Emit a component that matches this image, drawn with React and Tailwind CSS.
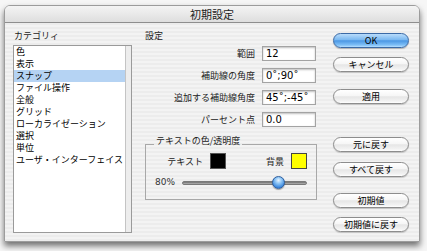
import React from "react";

const F = "font-['Noto_Sans_CJK_JP','Noto_Sans',sans-serif]";

function Btn({ children, primary, className = "" }) {
  const base =
    "h-[15px] w-[76px] rounded-full flex items-center justify-center text-[9px] leading-none text-black border ";
  const skin = primary
    ? "border-[#3b6aa6] bg-[linear-gradient(#b9dcfb,#7ab8f0_45%,#4b97e4_52%,#7fc0f7_85%,#b8e0ff)] shadow-[0_1px_1px_rgba(0,0,0,0.25)]"
    : "border-[#8d8d8d] bg-[linear-gradient(#ffffff,#f6f6f6_45%,#e6e6e6_52%,#f2f2f2_85%,#ffffff)] shadow-[0_1px_1px_rgba(0,0,0,0.18)]";
  return <div className={base + skin + " " + className}>{children}</div>;
}

function Field({ label, value }) {
  return (
    <div className="flex items-center h-[15px]">
      <div className="w-[110px] text-right text-[9px] leading-none text-[#222]">{label}</div>
      <div className="ml-[7px] h-[15px] w-[54px] bg-white border border-[#a3a3a3] shadow-[inset_0_1px_2px_rgba(0,0,0,0.25)] flex items-center pl-[3px] text-[10px] leading-none text-black font-['DejaVu_Sans',sans-serif]">
        {value}
      </div>
    </div>
  );
}

export default function App() {
  const items = [
    "色",
    "表示",
    "スナップ",
    "ファイル操作",
    "全般",
    "グリッド",
    "ローカライゼーション",
    "選択",
    "単位",
    "ユーザ・インターフェイス",
  ];
  return (
    <div className={"w-[427px] h-[251px] overflow-hidden bg-[#f6f6f6] pt-[5px] pl-[4px] " + F}>
      <div className="w-[416px] h-[237px] rounded-t-[6px] border border-[#9c9c9c] shadow-[0_4px_6px_rgba(0,0,0,0.55)] flex flex-col overflow-hidden">
        <div className="h-[17px] shrink-0 flex items-center justify-center text-[11px] leading-none text-[#222] border-b border-[#8e8e8e] bg-[linear-gradient(#f4f4f4,#dedede)]">
          初期設定
        </div>
        <div className="flex-1 flex bg-[repeating-linear-gradient(0deg,#ececec_0px,#ececec_2px,#f3f3f3_2px,#f3f3f3_4px)]">
          {/* left column */}
          <div className="w-[140px] pl-[8px] pt-[7px] flex flex-col">
            <div className="h-[12px] text-[9px] leading-[12px] text-[#222] pl-[1px]">カテゴリィ</div>
            <div className="mt-[3px] flex w-[119px] h-[188px] border border-[#9a9a9a]">
              <div className="w-[111px] bg-white flex flex-col">
                {items.map((it, i) => (
                  <div
                    key={it}
                    className={
                      "h-[12px] pl-[2px] text-[9px] leading-[12px] text-black whitespace-nowrap " +
                      (i === 2 ? "bg-[#b5d3f3]" : "")
                    }
                  >
                    {it}
                  </div>
                ))}
              </div>
              <div className="flex-1 bg-[#ededed] border-l border-[#c4c4c4]" />
            </div>
          </div>

          {/* settings column */}
          <div className="w-[172px] pt-[7px] flex flex-col">
            <div className="h-[12px] text-[9px] leading-[12px] text-[#222]">設定</div>
            <div className="mt-[4px] flex flex-col gap-[7px]">
              <Field label="範囲" value="12" />
              <Field label="補助線の角度" value="0˚;90˚" />
              <Field label="追加する補助線角度" value="45˚;-45˚" />
              <Field label="パーセント点" value="0.0" />
            </div>
            <fieldset className="mt-[8px] border border-[#a8a8a8] h-[65px]">
              <legend className="ml-[8px] px-[2px] text-[9px] leading-[12px] pb-[6px] text-[#222]">
                テキストの色/透明度
              </legend>
              <div className="flex items-center h-[16px]">
                <div className="w-[57px] text-right text-[9px] leading-none text-[#222]">テキスト</div>
                <div className="ml-[7px] w-[16px] h-[16px] bg-black border border-[#555]" />
                <div className="w-[58px] text-right text-[9px] leading-none text-[#222]">背景</div>
                <div className="ml-[7px] w-[16px] h-[16px] bg-[#ffff00] border border-[#444]" />
              </div>
              <div className="mt-[7px] flex items-center h-[13px] pl-[9px]">
                <div className="w-[27px] text-[9px] leading-none text-[#333] font-['DejaVu_Sans',sans-serif]">80%</div>
                <div className="relative w-[125px] h-[4px] rounded-full bg-[linear-gradient(#6e6e6e,#b4b4b4)] border border-[#7a7a7a]">
                  <div className="absolute left-[89px] top-[-6px] w-[13px] h-[13px] rounded-full border border-[#2f5f9e] bg-[radial-gradient(circle_at_50%_30%,#e8f4ff_0%,#8cc4f5_35%,#3a86dc_75%,#2a6cbf_100%)] shadow-[0_1px_1px_rgba(0,0,0,0.35)]" />
                </div>
              </div>
            </fieldset>
          </div>

          {/* buttons column */}
          <div className="ml-[16px] pt-[10px] flex flex-col">
            <Btn primary>OK</Btn>
            <Btn className="mt-[9px]">キャンセル</Btn>
            <Btn className="mt-[17px]">適用</Btn>
            <Btn className="mt-[33px]">元に戻す</Btn>
            <Btn className="mt-[10px]">すべて戻す</Btn>
            <Btn className="mt-[16px]">初期値</Btn>
            <Btn className="mt-[9px]">初期値に戻す</Btn>
          </div>
        </div>
      </div>
    </div>
  );
}
